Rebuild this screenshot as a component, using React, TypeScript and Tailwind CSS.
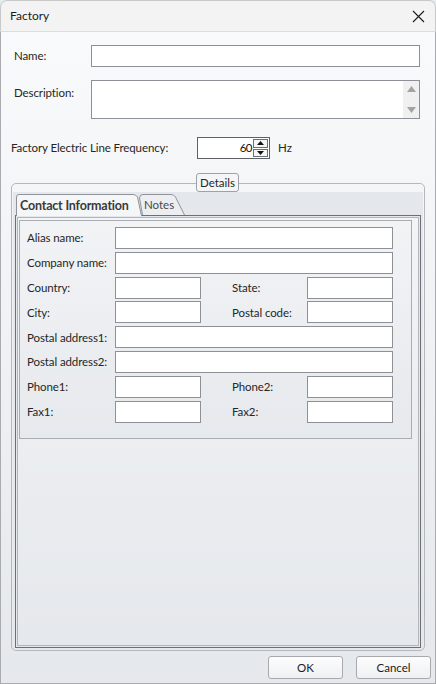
const font = "font-['Segoe_UI',Lato,'Liberation_Sans',sans-serif]";

function Field({ w, h = "h-[22px]" }: { w: string; h?: string }) {
  return <div className={`${w} ${h} shrink-0 bg-white border border-[#8d9096]`} />;
}

function Label({ children, w }: { children: React.ReactNode; w: string }) {
  return <span className={`${w} shrink-0 text-[11.5px] text-[#262626] tracking-[-0.1px]`}>{children}</span>;
}

function PairRow({ left, right }: { left: string; right: string }) {
  return (
    <div className="flex items-center h-[22px]">
      <Label w="w-[88px]">{left}</Label>
      <Field w="w-[86px]" />
      <Label w="w-[31px]">{""}</Label>
      <Label w="w-[75px]">{right}</Label>
      <Field w="w-[86px]" />
    </div>
  );
}

function WideRow({ label }: { label: string }) {
  return (
    <div className="flex items-center h-[22px]">
      <Label w="w-[88px]">{label}</Label>
      <Field w="w-[278px]" />
    </div>
  );
}

export default function App() {
  return (
    <div className={`${font} w-[436px] h-[684px] flex flex-col bg-[#e9ecef]`}>
      {/* title bar */}
      <div className="h-[32px] shrink-0 flex items-center justify-between pl-[9px] pr-[9px] bg-[#f3f3f3] border-b border-[#dcdcdc] rounded-t-[7px] border-x border-t border-x-[#c9c9c9] border-t-[#c9c9c9]">
        <span className="text-[12px] text-[#1b1b1b]">Factory</span>
        <svg width="13" height="13" viewBox="0 0 13 13" className="mr-[1px]">
          <path d="M1 1 L12 12 M12 1 L1 12" stroke="#1b1b1b" strokeWidth="1.1" fill="none" />
        </svg>
      </div>

      {/* body */}
      <div className="flex-1 flex flex-col pl-[10px] border-x border-b border-[#a9abae] bg-gradient-to-b from-[#f9fafb] to-[#e5e8ec]">
        <div className="mt-[13px] flex items-center h-[22px]">
          <Label w="w-[80px] pl-[3px]">Name:</Label>
          <Field w="w-[329px]" />
        </div>

        <div className="mt-[13px] flex items-start">
          <Label w="w-[80px] pl-[3px] pt-[4px]">Description:</Label>
          <div className="w-[329px] h-[39px] bg-white border border-[#8d9096] flex justify-end">
            <div className="w-[16px] h-full bg-[#f0f0f0] flex flex-col items-center justify-between py-[5px]">
              <svg width="9" height="6" viewBox="0 0 9 6"><path d="M0 6 L4.5 0 L9 6 Z" fill="#a3a3a3" /></svg>
              <svg width="9" height="6" viewBox="0 0 9 6"><path d="M0 0 L4.5 6 L9 0 Z" fill="#a3a3a3" /></svg>
            </div>
          </div>
        </div>

        <div className="mt-[18px] flex items-center h-[22px]">
          <Label w="w-[186px]">Factory Electric Line Frequency:</Label>
          <div className="w-[73px] h-[22px] bg-white border border-[#5e6166] flex items-center justify-end pr-[1px]">
            <span className="text-[11.5px] text-[#111] mr-[1px] tracking-[-0.5px]">60</span>
            <div className="w-[15px] h-[18px] flex flex-col gap-px">
              <div className="flex-1 border border-[#6b6e73] bg-[#f6f6f6] flex items-center justify-center">
                <svg width="7" height="4" viewBox="0 0 7 4"><path d="M0 4 L3.5 0 L7 4 Z" fill="#111" /></svg>
              </div>
              <div className="flex-1 border border-[#6b6e73] bg-[#f6f6f6] flex items-center justify-center">
                <svg width="7" height="4" viewBox="0 0 7 4"><path d="M0 0 L3.5 4 L7 0 Z" fill="#111" /></svg>
              </div>
            </div>
          </div>
          <span className="ml-[8px] text-[11.5px] text-[#262626]">Hz</span>
        </div>

        {/* Details group */}
        <div className="relative mt-[24px] w-[414px] h-[468px] border border-[#b4b8bd] rounded-[5px] flex flex-col px-[2px] pt-[8px] pb-[2px]">
          <div className="absolute -top-[11px] left-[184px] h-[19px] px-[3px] flex items-center bg-[#f4f5f7] border border-[#9ea2a8] rounded-[3px] text-[11.5px] text-[#262626]">
            Details
          </div>

          <div className="flex-1 flex flex-col bg-[#e4e7eb] -mx-px px-px">
            {/* tab strip */}
            <div className="h-[23px] flex items-end pl-[2px] relative">
              <div className="relative h-[22px] w-[126px] -mb-px z-10">
                <svg className="absolute inset-0" width="126" height="22" viewBox="0 0 126 22">
                  <path d="M0.5 22 L0.5 3 Q0.5 0.5 3 0.5 L117 0.5 Q120 0.5 121.5 3 L125.5 22" fill="#f5f6f8" stroke="#8f9398" />
                </svg>
                <span className="relative block pl-[4px] pt-[3px] text-[12.5px] font-bold text-[#3a3a3a] tracking-[-0.2px]">
                  Contact Information
                </span>
              </div>
              <div className="relative h-[21px] w-[46px] -ml-[3px]">
                <svg className="absolute inset-0" width="46" height="21" viewBox="0 0 46 21">
                  <path d="M3.5 21 L0.5 4 Q0.5 0.5 4 0.5 L32 0.5 Q35 0.5 36.5 3 L45.5 21" fill="#eceef1" stroke="#8f9398" />
                </svg>
                <span className="relative block pl-[5px] pt-[2px] text-[11.5px] text-[#4a4a4a]">Notes</span>
              </div>
            </div>

            {/* tab page */}
            <div className="flex-1 mx-px border border-[#6c7075] p-px flex">
              <div className="flex-1 border border-[#b2b6bb] bg-gradient-to-b from-[#f2f4f6] to-[#e5e8ec] flex flex-col">
                <div className="ml-[1px] mt-[2px] w-[393px] border border-[#a9adb2] bg-gradient-to-b from-[#f2f3f5] to-[#e6e9ed] pl-[7px] pt-[6px] pb-[15px] flex flex-col gap-[2.8px]">
                  <WideRow label="Alias name:" />
                  <WideRow label="Company name:" />
                  <PairRow left="Country:" right="State:" />
                  <PairRow left="City:" right="Postal code:" />
                  <WideRow label="Postal address1:" />
                  <WideRow label="Postal address2:" />
                  <PairRow left="Phone1:" right="Phone2:" />
                  <PairRow left="Fax1:" right="Fax2:" />
                </div>
              </div>
            </div>
          </div>
        </div>

        {/* buttons */}
        <div className="mt-[5px] flex justify-end gap-[13px] pr-[4px]">
          <button className="w-[75px] h-[23px] border border-[#a7a9ad] rounded-[3px] bg-gradient-to-b from-[#fdfdfd] to-[#eef0f2] text-[11.5px] text-[#1b1b1b]">
            OK
          </button>
          <button className="w-[75px] h-[23px] border border-[#a7a9ad] rounded-[3px] bg-gradient-to-b from-[#fdfdfd] to-[#eef0f2] text-[11.5px] text-[#1b1b1b]">
            Cancel
          </button>
        </div>
      </div>
    </div>
  );
}
